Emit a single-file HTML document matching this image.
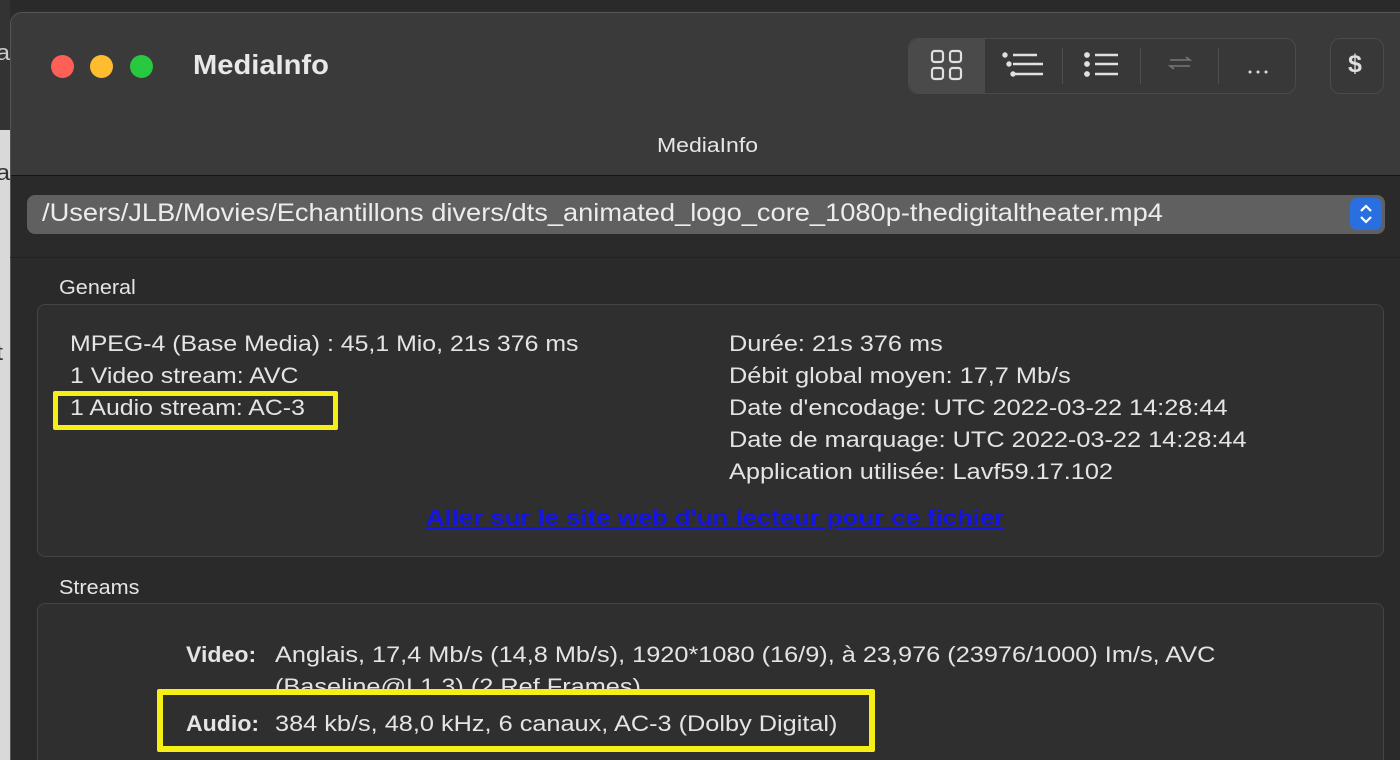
<!DOCTYPE html>
<html><head><meta charset="utf-8"><style>
*{margin:0;padding:0;box-sizing:border-box}
html,body{width:1400px;height:760px;overflow:hidden}
body{background:#2c2c2c;font-family:"Liberation Sans",sans-serif;position:relative;color:#e6e6e6}
.abs{position:absolute}
.t{position:absolute;white-space:nowrap;font-size:22px;color:#e4e4e4;transform:scaleX(1.15);transform-origin:0 0}
</style></head><body>
<div class="abs" style="left:0;top:0;width:1400px;height:10px;background:#2a2a2a"></div>
<div class="abs" style="left:0;top:0;width:10px;height:760px;background:#d9d9d9"></div>
<div class="abs" style="left:0;top:0;width:10px;height:130px;background:#333"></div>
<div class="t" style="left:-4px;top:40px;color:#ccc">a</div>
<div class="t" style="left:-4px;top:160px;color:#333">a</div>
<div class="t" style="left:-4px;top:205px;color:#333">i</div>
<div class="t" style="left:-4px;top:340px;color:#333">t</div>
<div class="abs" style="left:10px;top:12px;width:1390px;height:748px;background:#2a2a2a;border-top-left-radius:12px;border-top:1px solid #555;border-left:1px solid #555;overflow:hidden">
 <div class="abs" style="left:0;top:0;width:1400px;height:163px;background:#3a3a3a;border-bottom:1px solid #151515"></div>
</div>
<div class="abs" style="left:51px;top:55px;width:23px;height:23px;border-radius:50%;background:#fe5f57"></div>
<div class="abs" style="left:90px;top:55px;width:23px;height:23px;border-radius:50%;background:#febc2e"></div>
<div class="abs" style="left:130px;top:55px;width:23px;height:23px;border-radius:50%;background:#28c840"></div>
<div class="t" style="left:193px;top:49px;font-size:28px;font-weight:bold;color:#e8e8e8;transform:scaleX(1.04)">MediaInfo</div>
<div class="abs" style="left:908px;top:38px;width:388px;height:56px;border-radius:10px;border:1px solid #4a4a4a;background:#383838"></div>
<div class="abs" style="left:909px;top:39px;width:76px;height:54px;border-radius:10px 0 0 10px;background:#4a4a4a"></div>
<div class="abs" style="left:1062px;top:48px;width:1px;height:36px;background:#4e4e4e"></div>
<div class="abs" style="left:1140px;top:48px;width:1px;height:36px;background:#4e4e4e"></div>
<div class="abs" style="left:1218px;top:48px;width:1px;height:36px;background:#4e4e4e"></div>
<svg class="abs" style="left:900px;top:20px" width="500" height="80" fill="none" stroke="#e0e0e0" stroke-width="2.2">
 <rect x="32" y="31" width="11" height="11" rx="2.5"/><rect x="50" y="31" width="11" height="11" rx="2.5"/>
 <rect x="32" y="48" width="11" height="11" rx="2.5"/><rect x="50" y="48" width="11" height="11" rx="2.5"/>
 <path d="M113 35h24M113 44h30M113 54h30" stroke-width="2.5"/>
 <circle cx="105" cy="35" r="1.6" fill="#e0e0e0"/><circle cx="109" cy="44" r="1.6" fill="#e0e0e0"/><circle cx="113" cy="54" r="1.6" fill="#e0e0e0"/>
 <path d="M195 35h23M195 44h23M195 54h23" stroke-width="2.5"/>
 <circle cx="187" cy="35" r="1.8" fill="#e0e0e0"/><circle cx="187" cy="44" r="1.8" fill="#e0e0e0"/><circle cx="187" cy="54" r="1.8" fill="#e0e0e0"/>
 <path d="M270 40h20l-4-3M290 46h-20l4 3" stroke="#777" stroke-width="1.5"/>
 <circle cx="350" cy="52" r="1.5" fill="#ddd" stroke="none"/><circle cx="358" cy="52" r="1.5" fill="#ddd" stroke="none"/><circle cx="366" cy="52" r="1.5" fill="#ddd" stroke="none"/>
</svg>
<div class="abs" style="left:1330px;top:38px;width:54px;height:56px;border-radius:10px;border:1px solid #4a4a4a;background:#383838"></div>
<div class="t" style="left:1348px;top:50px;font-size:25px;font-weight:bold;color:#ddd;transform:none">$</div>
<div class="t" style="left:657px;top:135px;font-size:20px;color:#e6e6e6">MediaInfo</div>
<div class="abs" style="left:27px;top:195px;width:1358px;height:39px;border-radius:8px;background:#606060"></div>
<div class="t" style="left:42px;top:199px;font-size:25px;color:#ececec;transform:scaleX(1.09)">/Users/JLB/Movies/Echantillons divers/dts_animated_logo_core_1080p-thedigitaltheater.mp4</div>
<div class="abs" style="left:1350px;top:198px;width:32px;height:32px;border-radius:7px;background:#2a6fe0"></div>
<svg class="abs" style="left:1350px;top:198px" width="32" height="32" fill="none" stroke="#fff" stroke-width="2.2"><path d="M11 13l5-5 5 5M11 19l5 5 5-5"/></svg>
<div class="abs" style="left:10px;top:257px;width:1390px;height:1px;background:#222"></div>
<div class="t" style="left:59px;top:277px;font-size:20px;transform:scaleX(1.08)">General</div>
<div class="abs" style="left:37px;top:304px;width:1347px;height:253px;border-radius:8px;border:1px solid #444;background:#2f2f2f"></div>
<div class="t" style="left:70px;top:331px;transform:scaleX(1.13)">MPEG-4 (Base Media) : 45,1 Mio, 21s 376 ms</div>
<div class="t" style="left:70px;top:363px;transform:scaleX(1.13)">1 Video stream: AVC</div>
<div class="t" style="left:70px;top:395px;transform:scaleX(1.13)">1 Audio stream: AC-3</div>
<div class="abs" style="left:53px;top:391px;width:285px;height:39px;border:5px solid #f5ef16;border-radius:2px"></div>
<div class="t" style="left:729px;top:331px">Durée: 21s 376 ms</div>
<div class="t" style="left:729px;top:363px">Débit global moyen: 17,7 Mb/s</div>
<div class="t" style="left:729px;top:395px">Date d'encodage: UTC 2022-03-22 14:28:44</div>
<div class="t" style="left:729px;top:427px">Date de marquage: UTC 2022-03-22 14:28:44</div>
<div class="t" style="left:729px;top:459px">Application utilisée: Lavf59.17.102</div>
<div class="t" style="left:426px;top:505px;color:#1414e6;font-weight:bold;text-decoration:underline;font-size:22px;transform:scaleX(1.17)">Aller sur le site web d'un lecteur pour ce fichier</div>
<div class="t" style="left:59px;top:577px;font-size:20px;transform:scaleX(1.08)">Streams</div>
<div class="abs" style="left:37px;top:603px;width:1347px;height:157px;border-radius:8px 8px 0 0;border:1px solid #444;border-bottom:none;background:#2f2f2f"></div>
<div class="t" style="left:186px;top:642px;font-weight:bold;transform:scaleX(1.05)">Video:</div>
<div class="t" style="left:275px;top:642px">Anglais, 17,4 Mb/s (14,8 Mb/s), 1920*1080 (16/9), à 23,976 (23976/1000) Im/s, AVC</div>
<div class="t" style="left:275px;top:674px">(Baseline@L1.3) (2 Ref Frames)</div>
<div class="abs" style="left:157px;top:689px;width:718px;height:63px;border:6px solid #f5ef16;border-radius:2px;background:#2f2f2f"></div>
<div class="t" style="left:186px;top:711px;font-weight:bold;transform:scaleX(1.05)">Audio:</div>
<div class="t" style="left:275px;top:711px">384 kb/s, 48,0 kHz, 6 canaux, AC-3 (Dolby Digital)</div>
</body></html>
